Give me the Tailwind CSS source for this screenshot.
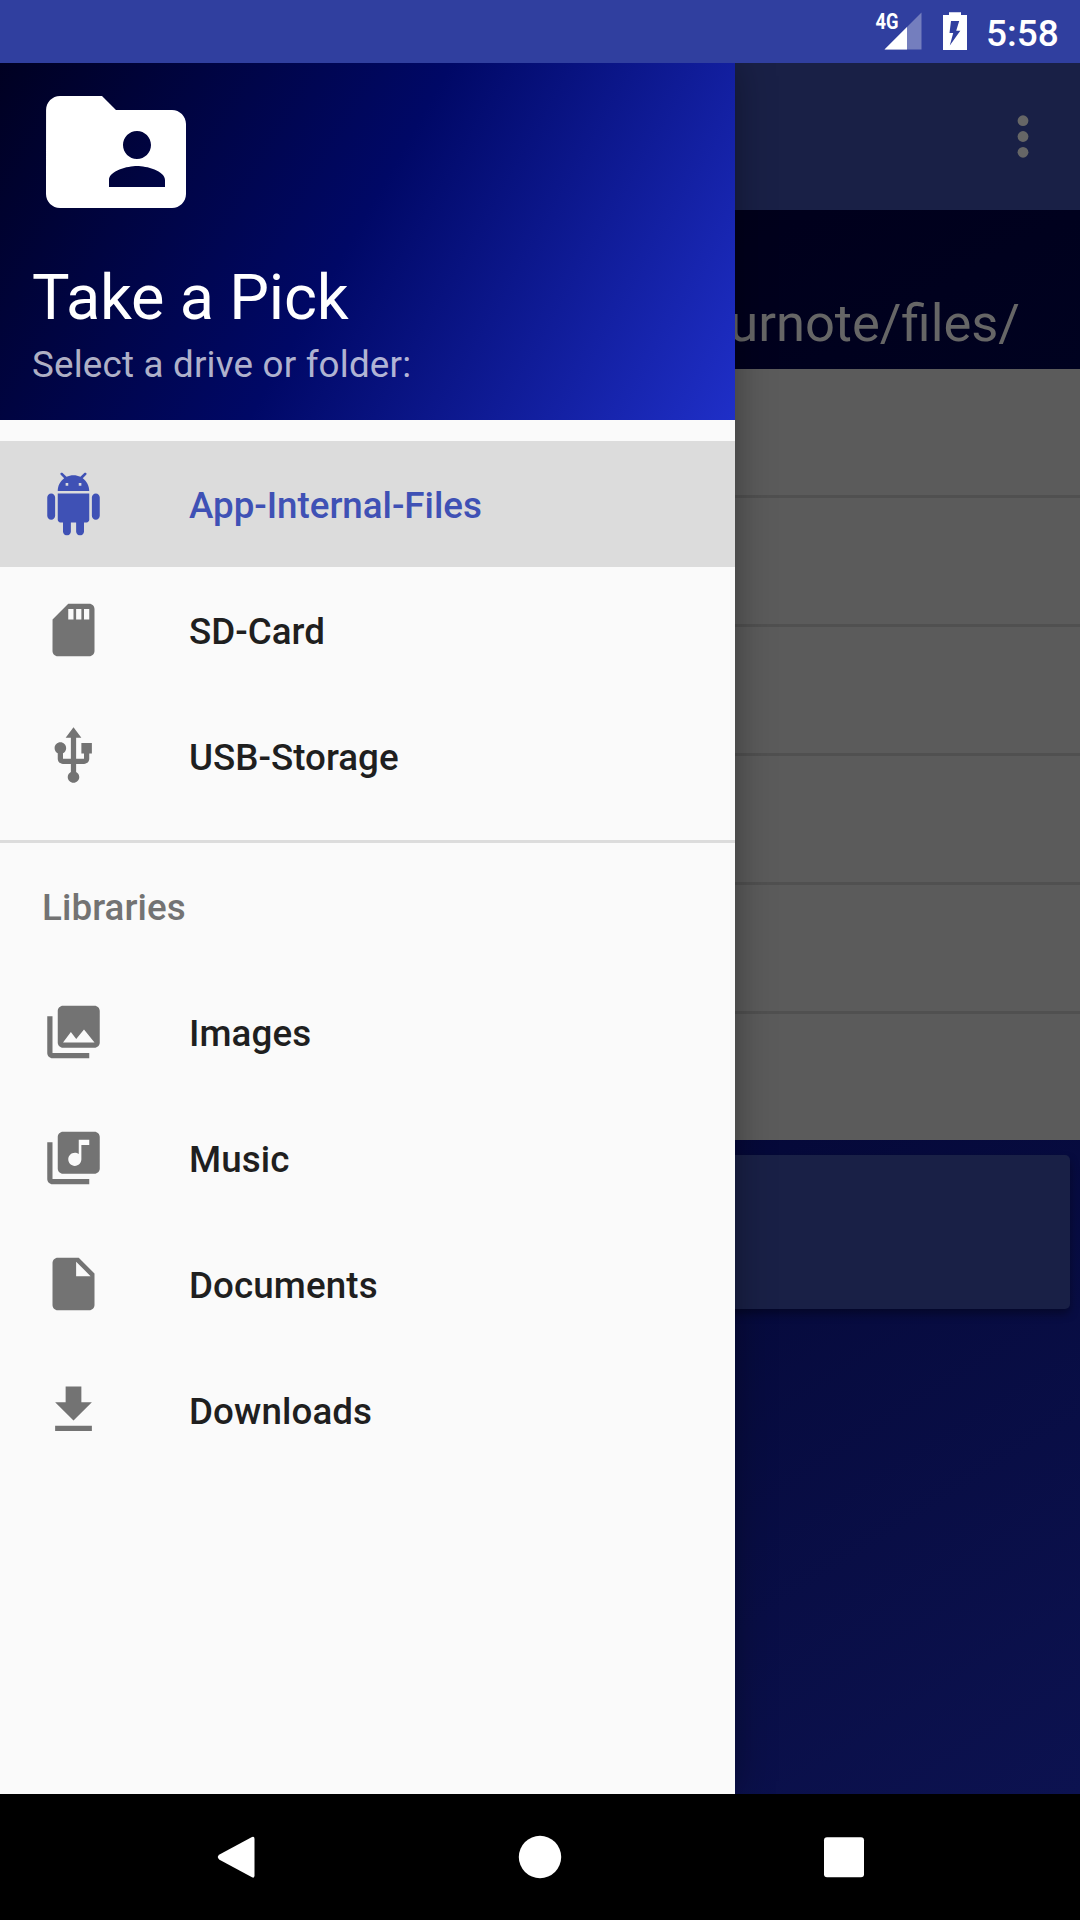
<!DOCTYPE html>
<html lang="en">
<head>
<meta charset="utf-8">
<title>Take a Pick</title>
<script src="https://cdn.jsdelivr.net/npm/@tailwindcss/browser@4"></script>
</head>
<body class="bg-black">
<div class="relative flex flex-col w-[1080px] h-[1920px] overflow-hidden font-['Roboto',sans-serif]">
  <!-- Status bar -->
  <header class="relative z-10 flex h-[63px] shrink-0 items-center bg-[#303f9f] text-white">
    <svg class="ml-[874px] h-[63px] w-[50px] shrink-0" viewBox="874 0 50 63">
      <path d="M921.5 12.5V49.5H884.5Z" fill="#fff" fill-opacity=".33"/>
      <path d="M907 27V49.5H884.5Z" fill="#fff"/>
      <text x="875.5" y="28.7" font-size="21.5" font-weight="700" textLength="23" lengthAdjust="spacingAndGlyphs" fill="#fff">4G</text>
    </svg>
    <svg class="ml-[18px] h-[63px] w-[26px] shrink-0" viewBox="942 0 26 63">
      <path fill-rule="evenodd" fill="#fff" d="M949 12.3H961V15H967V50H943V15H949ZM951 21L949.5 33H953.2L949.8 45.6L960.3 30.7H956.2L959.2 21Z"/>
    </svg>
    <span class="ml-[18px] text-[37px] leading-none font-medium translate-y-[2px]">5:58</span>
  </header>

  <div class="relative h-[1731px] shrink-0 bg-[linear-gradient(148deg,#000008_0%,#020530_50%,#0c1250_100%)]">
    <!-- File browser behind the drawer -->
    <main class="flex h-full flex-col">
      <div class="flex h-[147px] shrink-0 items-center justify-end bg-[#192046] pr-[51.500px]">
        <svg class="h-[44px] w-[12px] -translate-y-[0.5px]" viewBox="0 0 12 44" fill="#666"><circle cx="6" cy="6.2" r="5.4"/><circle cx="6" cy="22" r="5.4"/><circle cx="6" cy="37.8" r="5.4"/></svg>
      </div>
      <div class="flex h-[159px] shrink-0 items-end justify-end bg-[linear-gradient(150deg,#000010,#00001c_60%,#000220)] pr-[60px] pb-[15px] text-[52.5px] leading-[62px] text-[#666]">…/ournote/files/</div>
      <div class="flex h-[771px] shrink-0 flex-col bg-[#5b5b5b]">
        <div class="h-[129px] border-b-3 border-[#505050]"></div>
        <div class="h-[129px] border-b-3 border-[#505050]"></div>
        <div class="h-[129px] border-b-3 border-[#505050]"></div>
        <div class="h-[129px] border-b-3 border-[#505050]"></div>
        <div class="h-[129px] border-b-3 border-[#505050]"></div>
      </div>
      <div class="mx-[10px] mt-[15px] h-[154px] shrink-0 rounded-[5px] bg-[#192046] shadow-[0_5px_8px_rgba(0,0,0,0.35)]"></div>
    </main>

    <!-- Navigation drawer -->
    <aside class="absolute left-0 top-0 flex h-full w-[735px] flex-col bg-[#fafafa] shadow-[0_0_36px_rgba(0,0,0,0.35)]">
      <div class="flex h-[357px] shrink-0 flex-col bg-[linear-gradient(119.7deg,#00001c_0%,#000866_50%,#1f2fc8_100%)] bg-[length:735px_420px] bg-bottom bg-no-repeat pl-[32px] pt-[5px]">
        <svg class="size-[168px] shrink-0" viewBox="0 0 24 24" fill="#fff"><path d="M20 6h-8l-2-2H4c-1.1 0-1.99.9-1.99 2L2 18c0 1.1.9 2 2 2h16c1.1 0 2-.9 2-2V8c0-1.1-.9-2-2-2zm-5 3c1.1 0 2 .9 2 2s-.9 2-2 2-2-.9-2-2 .9-2 2-2zm4 8h-8v-1c0-1.33 2.67-2 4-2s4 .67 4 2v1z"/></svg>
        <div class="mt-[25px] text-[63px] leading-[74px] tracking-[-0.2px] text-white">Take a Pick</div>
        <div class="mt-[8px] text-[36.75px] leading-[43px] tracking-[0.2px] text-white/70">Select a drive or folder:</div>
      </div>

      <nav class="flex flex-col pt-[21px] text-[36.75px] leading-[43px] font-medium tracking-[0.1px] text-[#1f1f1f]">
        <a class="flex h-[126px] items-center gap-[84px] bg-[#dcdcdc] pl-[42px] text-[#3f51b5]">
          <svg class="size-[63px] -translate-y-[0.5px]" viewBox="0 0 24 24" fill="currentColor"><path d="M6 18c0 .55.45 1 1 1h1v3.5c0 .83.67 1.5 1.5 1.5s1.5-.67 1.5-1.5V19h2v3.5c0 .83.67 1.5 1.5 1.5s1.5-.67 1.5-1.5V19h1c.55 0 1-.45 1-1V8H6v10zM3.500 8C2.670 8 2 8.670 2 9.500v7c0 .83.67 1.500 1.500 1.500S5 17.330 5 16.500v-7C5 8.670 4.330 8 3.500 8zm17 0c-.83 0-1.500.67-1.500 1.500v7c0 .83.67 1.500 1.500 1.500s1.500-.67 1.500-1.500v-7c0-.83-.67-1.500-1.500-1.500zm-4.970-5.840l1.300-1.300c.2-.2.2-.51 0-.71-.2-.2-.51-.2-.71 0l-1.480 1.480C13.850 1.230 12.950 1 12 1c-.96 0-1.860.23-2.660.63L7.850.15c-.2-.2-.51-.2-.71 0-.2.2-.2.51 0 .71l1.310 1.310C6.970 3.260 6 5.010 6 7h12c0-1.990-.97-3.750-2.470-4.840zM10 5H9V4h1v1zm5 0h-1V4h1v1z"/></svg>
          <span class="translate-y-px tracking-[-0.03px]">App-Internal-Files</span>
        </a>
        <a class="flex h-[126px] items-center gap-[84px] pl-[42px]">
          <svg class="size-[63px] -translate-y-[0.5px]" viewBox="0 0 24 24" fill="#737373"><path d="M18 2h-8L4.020 8 4 20c0 1.100.9 2 2 2h12c1.100 0 2-.9 2-2V4c0-1.100-.9-2-2-2zm-6 6h-2V4h2v4zm3 0h-2V4h2v4zm3 0h-2V4h2v4z"/></svg>
          <span class="translate-y-px tracking-normal">SD-Card</span>
        </a>
        <a class="flex h-[126px] items-center gap-[84px] pl-[42px]">
          <svg class="size-[63px] -translate-y-[0.5px]" viewBox="0 0 24 24" fill="#737373"><path d="M15 7v4h1v2h-3V5h2l-3-4-3 4h2v8H8v-2.070c.7-.37 1.200-1.080 1.200-1.930 0-1.210-.99-2.200-2.200-2.200-1.210 0-2.200.99-2.200 2.200 0 .85.5 1.560 1.200 1.930V13c0 1.110.89 2 2 2h3v3.050c-.71.37-1.200 1.100-1.200 1.950 0 1.220.99 2.200 2.200 2.200 1.210 0 2.200-.98 2.200-2.200 0-.85-.49-1.580-1.200-1.950V15h3c1.110 0 2-.89 2-2v-2h1V7h-4z"/></svg>
          <span class="translate-y-px tracking-normal">USB-Storage</span>
        </a>
        <div class="mt-[21px] h-[3px] bg-[#dcdcdc]"></div>
        <h2 class="flex h-[126px] items-center pl-[42px] text-[#737373]"><span class="translate-y-px">Libraries</span></h2>
        <a class="flex h-[126px] items-center gap-[84px] pl-[42px]">
          <svg class="size-[63px] -translate-y-[0.5px]" viewBox="0 0 24 24" fill="#737373"><path d="M22 16V4c0-1.100-.9-2-2-2H8c-1.100 0-2 .9-2 2v12c0 1.100.9 2 2 2h12c1.100 0 2-.9 2-2zm-11-4l2.030 2.710L16 11l4 5H8l3-4zM2 6v14c0 1.100.9 2 2 2h14v-2H4V6H2z"/></svg>
          <span class="translate-y-px">Images</span>
        </a>
        <a class="flex h-[126px] items-center gap-[84px] pl-[42px]">
          <svg class="size-[63px] -translate-y-[0.5px]" viewBox="0 0 24 24" fill="#737373"><path d="M20 2H8c-1.100 0-2 .9-2 2v12c0 1.100.9 2 2 2h12c1.100 0 2-.9 2-2V4c0-1.100-.9-2-2-2zm-2 5h-3v5.500c0 1.380-1.120 2.500-2.500 2.500S10 13.880 10 12.500s1.120-2.500 2.500-2.500c.57 0 1.080.19 1.500.51V5h4v2zM4 6H2v14c0 1.100.9 2 2 2h14v-2H4V6z"/></svg>
          <span class="translate-y-px">Music</span>
        </a>
        <a class="flex h-[126px] items-center gap-[84px] pl-[42px]">
          <svg class="size-[63px] -translate-y-[0.5px]" viewBox="0 0 24 24" fill="#737373"><path d="M6 2c-1.100 0-1.990.9-1.990 2L4 20c0 1.100.89 2 1.990 2H18c1.100 0 2-.9 2-2V8l-6-6H6zm7 7V3.500L18.500 9H13z"/></svg>
          <span class="translate-y-px">Documents</span>
        </a>
        <a class="flex h-[126px] items-center gap-[84px] pl-[42px]">
          <svg class="size-[63px] -translate-y-[0.5px]" viewBox="0 0 24 24" fill="#737373"><path d="M19 9h-4V3H9v6H5l7 7 7-7zM5 18v2h14v-2H5z"/></svg>
          <span class="translate-y-px">Downloads</span>
        </a>
      </nav>
    </aside>
  </div>

  <!-- System navigation -->
  <footer class="relative flex h-[126px] shrink-0 items-center bg-black">
    <svg class="h-[126px] w-full" viewBox="0 0 1080 126" fill="#fff">
      <path d="M252 43L219.500 60.500Q216 63 219.500 65.700L252 83.300Q254.500 84.500 254.500 81.500V45Q254.500 42 252 43Z"/>
      <circle cx="540" cy="63" r="21.200"/>
      <rect x="824" y="43.200" width="40" height="40" rx="3"/>
    </svg>
  </footer>
</div>
</body>
</html>
